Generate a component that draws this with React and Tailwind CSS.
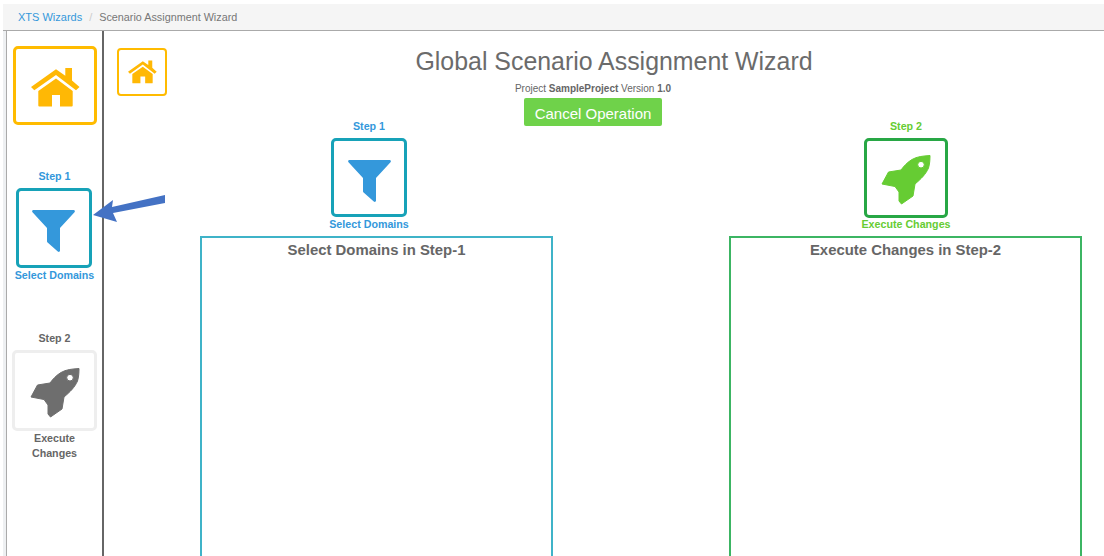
import React from "react";

const HomeIcon = ({ className }) => (
  <svg viewBox="0 0 49 39" className={className} fill="currentColor">
    <path d="M25 1.300 34.300 7.800V0H41V12.500L48.500 19 45 22.300 25 7 3.300 22.300 0 19z" />
    <path d="M25 10.500 41.700 23V37.500a1 1 0 0 1-1 1H29V27H21V38.500H8.300a1 1 0 0 1-1-1V23z" />
  </svg>
);

const FunnelIcon = ({ className }) => (
  <svg viewBox="0 0 43 42" className={className} fill="currentColor">
    <path d="M1.500 0h40c1.300 0 1.800 1.400 1 2.300L28 18v22.500c0 1.300-1.300 1.900-2.200 1L15.600 32.500c-.4-.4-.6-.8-.6-1.300V18L.5 2.300C-.3 1.400.2 0 1.500 0z" />
  </svg>
);

const RocketIcon = ({ className }) => (
  <svg viewBox="0 0 50 50" className={className} fill="currentColor" stroke="currentColor" strokeWidth="1" strokeLinejoin="round">
    <path
      fillRule="evenodd"
      d="M49 .5C42 1 36 1.500 31 4.500 26 7.500 23 11 20 15L7.500 17 1 29 14 31.500 18 37 18 46 20.500 49 32 41 34 29C40 24 45 19 47.500 13 48.700 9 49 5 49 .5zM40 6.400a3.300 3.300 0 1 1 0 6.600 3.300 3.300 0 0 1 0-6.600z"
    />
  </svg>
);

export default function App() {
  return (
    <div className="relative w-[1104px] h-[556px] overflow-hidden bg-white text-[#666] font-['Liberation_Sans',Arial,sans-serif]">
      {/* Breadcrumb */}
      <div className="mt-1 ml-[3px] h-[27px] bg-[#f5f5f5] border-b border-[#aaaaaa] flex items-center pl-[15px] text-[11px]">
        <span className="text-[#3498db]">XTS Wizards</span>
        <span className="px-[7px] text-[#ccc]">/</span>
        <span className="text-[#777] text-[10.8px]">Scenario Assignment Wizard</span>
      </div>

      <div className="flex h-[525px] ml-[3px]">
        <div className="w-[3px] shrink-0 bg-[#eef0f2]" />

        {/* Sidebar */}
        <div className="w-[98px] shrink-0 border-l border-l-[#aaaaaa] border-r-2 border-r-[#666666] flex flex-col items-center font-bold text-[10.7px]">
          <div className="mt-[15px] ml-[1px] w-[84px] h-[79px] border-[3px] border-[#ffbb00] rounded-[5px] flex items-center justify-center text-[#ffb805]">
            <HomeIcon className="w-[49px] h-[39px] mt-[4px]" />
          </div>
          <div className="mt-[45px] text-[#3498db] leading-[13px]">Step 1</div>
          <div className="mt-[5px] mr-[2px] w-[76px] h-[80px] border-[3px] border-[#17a2b8] rounded-[5px] flex items-center justify-center text-[#3498db]">
            <FunnelIcon className="w-[43px] h-[42px] mt-[6px]" />
          </div>
          <div className="mt-[1px] text-[#3498db] leading-[13px] whitespace-nowrap">Select Domains</div>
          <div className="mt-[50px] leading-[13px]">Step 2</div>
          <div className="mt-[5px] w-[85px] h-[81px] border-[3px] border-[#eeeeee] rounded-[5px] flex items-center justify-center text-[#6e6e6e]">
            <RocketIcon className="w-[50px] h-[50px] mt-[4px]" />
          </div>
          <div className="text-center leading-[15px] w-[60px]">Execute Changes</div>
        </div>

        {/* Main */}
        <div className="flex-1 min-w-0">
          <div className="grid">
            <div className="col-start-1 row-start-1 self-start ml-[13px] mt-[17px] w-[50px] h-[48px] border-2 border-[#ffbb00] rounded-[4px] flex items-center justify-center text-[#ffb805]">
              <HomeIcon className="w-[29px] h-[24px]" />
            </div>
            <div className="col-start-1 row-start-1 flex flex-col items-center">
              <h1 className="mt-[12px] pl-[20px] text-[24.9px] leading-[36px] font-normal whitespace-nowrap text-[#6b6b6b]">
                Global Scenario Assignment Wizard
              </h1>
              <div className="mt-[3px] pr-[22px] text-[10px] leading-[14px]">
                Project <b>SampleProject</b> Version <b>1.0</b>
              </div>
              <div className="mt-[2px] mr-[22px] w-[138px] h-[28px] pt-[4px] rounded-[2px] bg-[#6fd24a] text-white text-[15px] flex items-center justify-center">
                Cancel Operation
              </div>
            </div>
          </div>

          <div className="flex pl-[96px] gap-[176px] font-bold">
            {/* Step 1 column */}
            <div className="w-[353px] flex flex-col items-center">
              <div className="mr-[15px] flex flex-col items-center text-[10.7px] text-[#3498db]">
                <div className="leading-[13px] -mt-[6px]">Step 1</div>
                <div className="mt-[5px] w-[76px] h-[79px] border-[3px] border-[#17a2b8] rounded-[5px] flex items-center justify-center">
                  <FunnelIcon className="w-[43px] h-[42px] mt-[6px]" />
                </div>
                <div className="mt-[1px] leading-[13px] whitespace-nowrap">Select Domains</div>
              </div>
              <div className="mt-[5px] w-full h-[330px] border-2 border-b-0 border-[#3fb3c8] text-center text-[14.9px] leading-[22px] pt-[1px]">
                Select Domains in Step-1
              </div>
            </div>

            {/* Step 2 column */}
            <div className="w-[353px] flex flex-col items-center">
              <div className="ml-[1px] flex flex-col items-center text-[10.7px] text-[#66cc33]">
                <div className="leading-[13px] -mt-[6px]">Step 2</div>
                <div className="mt-[5px] w-[84px] h-[80px] border-[3px] border-[#28a745] rounded-[5px] flex items-center justify-center">
                  <RocketIcon className="w-[50px] h-[50px] mt-[4px]" />
                </div>
                <div className="leading-[13px] whitespace-nowrap">Execute Changes</div>
              </div>
              <div className="mt-[5px] w-full h-[330px] border-2 border-b-0 border-[#3cb563] text-center text-[14.9px] leading-[22px] pt-[1px]">
                Execute Changes in Step-2
              </div>
            </div>
          </div>
        </div>
      </div>

      {/* Callout arrow */}
      <svg className="absolute left-[90px] top-[190px] w-[80px] h-[36px]" viewBox="90 190 80 36" fill="#4472c4">
        <path d="M93 215 113 200 112 207 165 195 165 203 113 213 117 222z" />
      </svg>
    </div>
  );
}
